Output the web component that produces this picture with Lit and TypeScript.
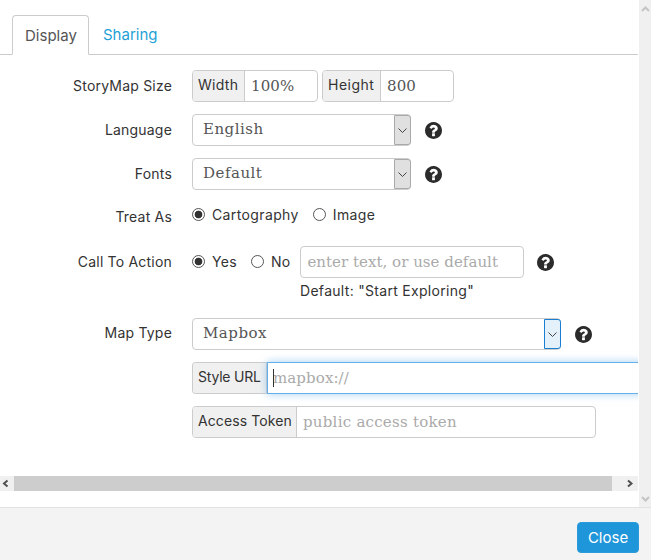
import { LitElement, html, css, svg } from 'lit';
import { customElement } from 'lit/decorators.js';

// FontAwesome style question-circle
const helpIcon = html`<svg class="help" viewBox="128 128 1536 1536" width="17" height="17">
  ${svg`<path fill="#2b2b2b" d="M1024 1376v-192q0-14-9-23t-23-9h-192q-14 0-23 9t-9 23v192q0 14 9 23t23 9h192q14 0 23-9t9-23zm256-672q0-88-55.5-163t-138.5-116-170-41q-243 0-371 213-15 24 8 42l132 100q7 6 19 6 16 0 25-12 53-68 86-92 34-24 86-24 48 0 85.5 26t37.5 59q0 38-20 61t-68 45q-63 28-115.5 86.5t-52.5 125.5v36q0 14 9 23t23 9h192q14 0 23-9t9-23q0-19 21.5-49.5t54.5-49.5q32-18 49-28.5t46-35 44.5-48 28-60.5 12.5-81zm384 192q0 209-103 385.5t-279.5 279.5-385.5 103-385.5-103-279.5-279.5-103-385.5 103-385.5 279.5-279.5 385.5-103 385.5 103 279.5 279.5 103 385.5z"/>`}
</svg>`;

const chevron = html`<svg viewBox="0 0 9 5" width="9" height="5"><path d="M0.5 0.5 L4.5 4.5 L8.5 0.5" fill="none" stroke="#444" stroke-width="1"/></svg>`;

@customElement('app-root')
export class AppRoot extends LitElement {
  static styles = css`
    :host {
      display: flex;
      flex-direction: column;
      width: 651px;
      height: 560px;
      overflow: hidden;
      background: #fff;
      color: #333;
      font-family: Inter, "Open Sans", sans-serif;
      font-size: 14px;
    }
    .body {
      display: flex;
      height: 507px;
    }
    .pane {
      width: 638px;
      display: flex;
      flex-direction: column;
      overflow: hidden;
    }
    .vscroll {
      width: 12px;
      margin-left: 1px;
      background: #f0f0f0;
      display: flex;
      flex-direction: column;
      justify-content: space-between;
      align-items: center;
      padding: 6px 0 5px;
      box-sizing: border-box;
    }
    .tabs {
      display: flex;
      padding: 15px 0 0 12px;
      height: 55px;
      box-sizing: border-box;
      border-bottom: 1px solid #ccc;
    }
    .tab {
      height: 40px;
      box-sizing: border-box;
      padding: 0 13px;
      line-height: 39px;
      font-size: 15px;
      color: #1f9fd6;
    }
    .tab.active {
      width: 77px;
      padding: 0 12px;
      color: #555;
      background: #fff;
      border: 1px solid #ccc;
      border-bottom-color: #fff;
      border-radius: 4px 4px 0 0;
      margin-right: 1px;
    }
    .form {
      display: flex;
      flex-direction: column;
      gap: 12px;
      padding-top: 15px;
    }
    .row {
      display: flex;
      min-height: 32px;
    }
    .label {
      width: 172px;
      flex: none;
      margin-right: 20px;
      text-align: right;
      line-height: 32px;
      letter-spacing: 0.2px;
    }
    .label.raised {
      line-height: 30px;
    }
    .controls {
      display: flex;
      align-items: center;
      height: 32px;
    }
    .group {
      display: flex;
      height: 32px;
      box-sizing: border-box;
      border: 1px solid #ccc;
      border-radius: 4px;
      flex: none;
    }
    .group.size-w {
      width: 126px;
    }
    .group.size-h {
      width: 132px;
      margin-left: 4px;
    }
    .group.cta {
      width: 224px;
    }
    .group.token {
      width: 404px;
    }
    .group.overflowing {
      border-right: none;
      border-radius: 4px 0 0 4px;
    }
    .addon {
      display: flex;
      align-items: center;
      box-sizing: border-box;
      padding: 0 0 3px 5px;
      background: #f0f0f0;
      border-right: 1px solid #ccc;
      border-radius: 3px 0 0 3px;
      white-space: nowrap;
      flex: none;
    }
    .addon.a-width {
      width: 52px;
      letter-spacing: 0.3px;
    }
    .addon.a-height {
      width: 58px;
      letter-spacing: 0.5px;
    }
    .addon.a-style {
      width: 74px;
      letter-spacing: -0.2px;
    }
    .addon.a-token {
      width: 104px;
      letter-spacing: 0.1px;
    }
    input.text {
      border: none;
      outline: none;
      padding: 0 6px;
      min-width: 0;
      flex: 1;
      width: 100%;
      background: transparent;
      font-family: "DejaVu Serif", serif;
      font-size: 15px;
      letter-spacing: 0.1px;
      color: #555;
      border-radius: 4px;
    }
    input.text::placeholder {
      color: #aaa;
      opacity: 1;
    }
    .group.token input.text {
      letter-spacing: 0.25px;
    }
    .group.cta input.text {
      letter-spacing: 0.03px;
    }
    .focused {
      position: relative;
      width: 380px;
      flex: none;
      display: flex;
      margin: -1px 0;
      border: 1px solid #66afe9;
      box-shadow: 0 0 8px rgba(102, 175, 233, 0.6);
      background: #fff;
      box-sizing: border-box;
    }
    .focused input.text {
      padding-left: 5px;
    }
    .caret {
      position: absolute;
      left: 5px;
      top: 6px;
      width: 1px;
      height: 18px;
      background: #333;
    }
    .select {
      display: flex;
      height: 32px;
      width: 219px;
      box-sizing: border-box;
      border: 1px solid #ccc;
      border-radius: 4px;
      flex: none;
    }
    .select.wide {
      width: 369px;
    }
    .select .value {
      flex: 1;
      padding-left: 10px;
      line-height: 29px;
      font-family: "DejaVu Serif", serif;
      font-size: 15px;
      letter-spacing: 0.5px;
      color: #555;
    }
    .arrow {
      width: 17px;
      box-sizing: border-box;
      display: flex;
      align-items: center;
      justify-content: center;
      background: #e0e0e0;
      border: 1px solid #aaa;
      border-radius: 0 3px 3px 0;
      margin: 0 -1px 0 0;
    }
    .arrow.active {
      background: #e4f1fb;
      border-color: #1a7fd0;
    }
    .help {
      margin-left: 13px;
      flex: none;
    }
    .select + .help {
      margin-left: 14px;
    }
    .radio {
      display: flex;
      align-items: center;
      gap: 7px;
      margin-right: 14px;
      letter-spacing: 0.3px;
    }
    .radio input {
      appearance: none;
      width: 13px;
      height: 13px;
      margin: 0;
      border: 1px solid #555;
      border-radius: 50%;
      background: #fff;
      box-sizing: border-box;
      flex: none;
    }
    .radio input:checked {
      background: radial-gradient(circle, #333 0 3.5px, #fff 4.2px);
    }
    .radio.lifted {
      margin-top: -8px;
      letter-spacing: 0.38px;
    }
    .radio.up {
      margin-top: -2px;
    }
    .radio.near {
      margin-right: 10px;
    }
    .stack {
      display: flex;
      flex-direction: column;
    }
    .note {
      margin-top: 3px;
      margin-left: 108px;
      line-height: 20px;
      margin-bottom: 5px;
      letter-spacing: 0.3px;
    }
    .hscroll {
      margin-top: auto;
      margin-bottom: 16px;
      height: 15px;
      background: #f0f0f0;
      display: flex;
      align-items: center;
    }
    .hscroll .thumb {
      width: 598px;
      height: 15px;
      margin-right: 14px;
      background: #cdcdcd;
    }
    .hscroll svg {
      flex: none;
    }
    .footer {
      height: 53px;
      box-sizing: border-box;
      background: #f3f3f3;
      border-top: 1px solid #e2e2e2;
      display: flex;
      justify-content: flex-end;
      padding: 14px 12px 0 0;
    }
    .close {
      width: 62px;
      height: 31px;
      border: 1px solid #2b9bdc;
      border-radius: 4px;
      background: #1f96d9;
      color: #fff;
      font-family: inherit;
      font-size: 15px;
      padding: 0;
    }
  `;

  render() {
    return html`
      <div class="body">
        <div class="pane">
          <div class="tabs">
            <div class="tab active">Display</div>
            <div class="tab">Sharing</div>
          </div>
          <div class="form">
            <div class="row">
              <div class="label">StoryMap Size</div>
              <div class="controls">
                <div class="group size-w">
                  <span class="addon a-width">Width</span>
                  <input class="text" value="100%" />
                </div>
                <div class="group size-h">
                  <span class="addon a-height">Height</span>
                  <input class="text" value="800" />
                </div>
              </div>
            </div>
            <div class="row">
              <div class="label">Language</div>
              <div class="controls">
                <div class="select">
                  <div class="value">English</div>
                  <div class="arrow">${chevron}</div>
                </div>
                ${helpIcon}
              </div>
            </div>
            <div class="row">
              <div class="label">Fonts</div>
              <div class="controls">
                <div class="select">
                  <div class="value">Default</div>
                  <div class="arrow">${chevron}</div>
                </div>
                ${helpIcon}
              </div>
            </div>
            <div class="row">
              <div class="label raised">Treat As</div>
              <div class="controls">
                <label class="radio lifted"><input type="radio" name="treat" checked />Cartography</label>
                <label class="radio lifted"><input type="radio" name="treat" />Image</label>
              </div>
            </div>
            <div class="row">
              <div class="label">Call To Action</div>
              <div class="stack">
                <div class="controls">
                  <label class="radio up"><input type="radio" name="cta" checked />Yes</label>
                  <label class="radio up near"><input type="radio" name="cta" />No</label>
                  <div class="group cta">
                    <input class="text" placeholder="enter text, or use default" />
                  </div>
                  ${helpIcon}
                </div>
                <div class="note">Default: "Start Exploring"</div>
              </div>
            </div>
            <div class="row">
              <div class="label raised">Map Type</div>
              <div class="controls">
                <div class="select wide">
                  <div class="value">Mapbox</div>
                  <div class="arrow active">${chevron}</div>
                </div>
                ${helpIcon}
              </div>
            </div>
            <div class="row">
              <div class="label"></div>
              <div class="controls">
                <div class="group overflowing">
                  <span class="addon a-style">Style URL</span>
                  <div class="focused">
                    <input class="text" placeholder="mapbox://" />
                    <span class="caret"></span>
                  </div>
                </div>
              </div>
            </div>
            <div class="row">
              <div class="label"></div>
              <div class="controls">
                <div class="group token">
                  <span class="addon a-token">Access Token</span>
                  <input class="text" placeholder="public access token" />
                </div>
              </div>
            </div>
          </div>
          <div class="hscroll">
            <svg viewBox="0 0 14 15" width="14" height="15"><path d="M7.5 4.5 L4 7.5 L7.5 10.5" fill="none" stroke="#505050" stroke-width="2"/></svg>
            <div class="thumb"></div>
            <svg viewBox="0 0 12 15" width="12" height="15"><path d="M2 4.5 L5.5 7.5 L2 10.5" fill="none" stroke="#505050" stroke-width="2"/></svg>
          </div>
        </div>
        <div class="vscroll">
          <svg viewBox="0 0 9 6" width="9" height="6"><path d="M1 5 L4.5 1.5 L8 5" fill="none" stroke="#c4c4c4" stroke-width="2"/></svg>
          <svg viewBox="0 0 9 6" width="9" height="6"><path d="M1 1 L4.5 4.5 L8 1" fill="none" stroke="#c4c4c4" stroke-width="2"/></svg>
        </div>
      </div>
      <div class="footer">
        <button class="close">Close</button>
      </div>
    `;
  }
}
